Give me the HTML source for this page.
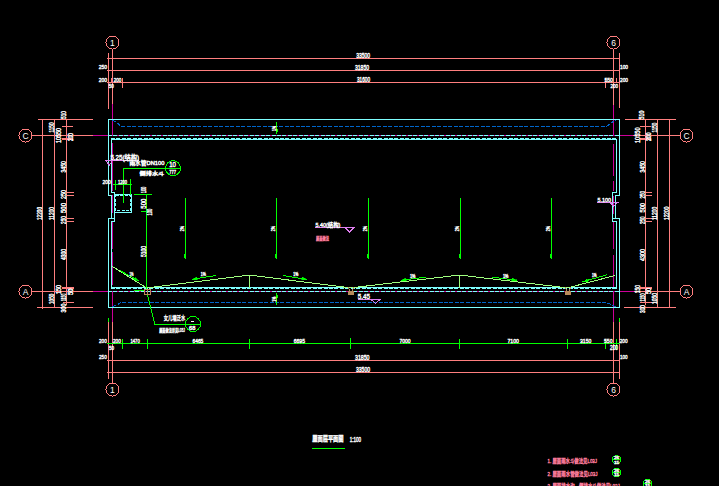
<!DOCTYPE html>
<html><head><meta charset="utf-8"><title>屋面层平面图</title>
<style>html,body{margin:0;padding:0;background:#000;overflow:hidden}svg{display:block}text{white-space:pre}</style>
</head><body>
<svg width="719" height="486" viewBox="0 0 719 486" shape-rendering="crispEdges">
<rect width="719" height="486" fill="#000"/>
<rect x="107" y="58" width="513" height="1" fill="#ff7f7f"/>
<rect x="107" y="70" width="513" height="1" fill="#ff7f7f"/>
<rect x="107" y="82" width="513" height="1" fill="#ff7f7f"/>
<rect x="112" y="49" width="1" height="55" fill="#ff7f7f"/>
<rect x="108" y="53" width="1" height="56" fill="#ff7f7f"/>
<rect x="613" y="49" width="1" height="56" fill="#ff7f7f"/>
<rect x="619" y="53" width="1" height="55" fill="#ff7f7f"/>
<rect x="122" y="78" width="1" height="10" fill="#ff7f7f"/>
<rect x="111" y="78" width="1" height="5" fill="#ff7f7f"/>
<rect x="605" y="78" width="1" height="10" fill="#ff7f7f"/>
<rect x="616" y="78" width="1" height="5" fill="#ff7f7f"/>
<circle cx="112.5" cy="42.5" r="6.5" fill="none" stroke="#ff7f7f" stroke-width="1"/>
<circle cx="613.5" cy="42.5" r="6.5" fill="none" stroke="#ff7f7f" stroke-width="1"/>
<rect x="107" y="360" width="513" height="1" fill="#ff7f7f"/>
<rect x="107" y="372" width="513" height="1" fill="#ff7f7f"/>
<rect x="112" y="322" width="1" height="62" fill="#ff7f7f"/>
<rect x="108" y="322" width="1" height="57" fill="#ff7f7f"/>
<rect x="613" y="322" width="1" height="62" fill="#ff7f7f"/>
<rect x="619" y="322" width="1" height="57" fill="#ff7f7f"/>
<circle cx="112.5" cy="389.5" r="6.5" fill="none" stroke="#ff7f7f" stroke-width="1"/>
<circle cx="613.5" cy="389.5" r="6.5" fill="none" stroke="#ff7f7f" stroke-width="1"/>
<rect x="38" y="119" width="55" height="1" fill="#ff7f7f"/>
<rect x="32" y="135" width="61" height="1" fill="#ff7f7f"/>
<rect x="32" y="291" width="61" height="1" fill="#ff7f7f"/>
<rect x="37" y="307" width="56" height="1" fill="#ff7f7f"/>
<rect x="42" y="119" width="1" height="190" fill="#ff7f7f"/>
<rect x="54" y="119" width="1" height="189" fill="#ff7f7f"/>
<rect x="66" y="119" width="1" height="186" fill="#ff7f7f"/>
<rect x="62" y="126" width="11" height="1" fill="#ff7f7f"/>
<rect x="62" y="138" width="11" height="1" fill="#ff7f7f"/>
<rect x="62" y="139" width="11" height="1" fill="#ff7f7f"/>
<rect x="66" y="192" width="8" height="1" fill="#ff7f7f"/>
<rect x="66" y="195" width="8" height="1" fill="#ff7f7f"/>
<rect x="66" y="218" width="8" height="1" fill="#ff7f7f"/>
<rect x="66" y="221" width="8" height="1" fill="#ff7f7f"/>
<rect x="62" y="287" width="12" height="1" fill="#ff7f7f"/>
<rect x="62" y="288" width="12" height="1" fill="#ff7f7f"/>
<rect x="63" y="302" width="11" height="1" fill="#ff7f7f"/>
<circle cx="25.5" cy="135.5" r="6.5" fill="none" stroke="#ff7f7f" stroke-width="1"/>
<circle cx="25.5" cy="291.5" r="6.5" fill="none" stroke="#ff7f7f" stroke-width="1"/>
<rect x="625" y="119" width="51" height="1" fill="#ff7f7f"/>
<rect x="633" y="135" width="48" height="1" fill="#ff7f7f"/>
<rect x="634" y="291" width="47" height="1" fill="#ff7f7f"/>
<rect x="624" y="307" width="52" height="1" fill="#ff7f7f"/>
<rect x="645" y="119" width="1" height="186" fill="#ff7f7f"/>
<rect x="657" y="119" width="1" height="189" fill="#ff7f7f"/>
<rect x="669" y="119" width="1" height="189" fill="#ff7f7f"/>
<rect x="640" y="126" width="11" height="1" fill="#ff7f7f"/>
<rect x="640" y="138" width="11" height="1" fill="#ff7f7f"/>
<rect x="640" y="139" width="11" height="1" fill="#ff7f7f"/>
<rect x="645" y="192" width="7" height="1" fill="#ff7f7f"/>
<rect x="645" y="195" width="7" height="1" fill="#ff7f7f"/>
<rect x="645" y="218" width="7" height="1" fill="#ff7f7f"/>
<rect x="645" y="221" width="7" height="1" fill="#ff7f7f"/>
<rect x="640" y="287" width="12" height="1" fill="#ff7f7f"/>
<rect x="640" y="288" width="12" height="1" fill="#ff7f7f"/>
<rect x="640" y="302" width="12" height="1" fill="#ff7f7f"/>
<circle cx="686.5" cy="135.5" r="6.5" fill="none" stroke="#ff7f7f" stroke-width="1"/>
<circle cx="686.5" cy="291.5" r="6.5" fill="none" stroke="#ff7f7f" stroke-width="1"/>
<rect x="112" y="104" width="1" height="32" fill="#cc0099"/>
<rect x="613" y="105" width="1" height="31" fill="#cc0099"/>
<rect x="112" y="143" width="1" height="48" fill="#cc0099"/>
<rect x="112" y="195" width="1" height="18" fill="#cc0099"/>
<rect x="112" y="222" width="1" height="27" fill="#cc0099"/>
<rect x="112" y="252" width="1" height="33" fill="#cc0099"/>
<rect x="112" y="292" width="1" height="30" fill="#cc0099"/>
<rect x="613" y="144" width="1" height="32" fill="#cc0099"/>
<rect x="613" y="181" width="1" height="10" fill="#cc0099"/>
<rect x="613" y="196" width="1" height="18" fill="#cc0099"/>
<rect x="613" y="222" width="1" height="27" fill="#cc0099"/>
<rect x="613" y="255" width="1" height="32" fill="#cc0099"/>
<rect x="613" y="292" width="1" height="30" fill="#cc0099"/>
<rect x="93" y="135" width="540" height="1" fill="#cc0099"/>
<rect x="93" y="291" width="541" height="1" fill="#cc0099"/>
<polygon points="108.5,119.5 619.5,119.5 619.5,195.5 615.5,195.5 615.5,218.5 619.5,218.5 619.5,307.5 108.5,307.5 108.5,218.5 111.5,218.5 111.5,195.5 108.5,195.5" fill="none" stroke="#7fffff" stroke-width="1" />
<rect x="108" y="218" width="7" height="1" fill="#7fffff"/>
<rect x="612" y="218" width="8" height="1" fill="#7fffff"/>
<rect x="111" y="139" width="506" height="1" fill="#7fffff"/>
<rect x="111" y="287" width="506" height="1" fill="#7fffff"/>
<line x1="111" y1="138.5" x2="617" y2="138.5" stroke="#7fffff" stroke-dasharray="4 1.45"/>
<line x1="111" y1="288.5" x2="617" y2="288.5" stroke="#7fffff" stroke-dasharray="4 1.45"/>
<polyline points="111.5,139.5 111.5,192.5 114.5,192.5 114.5,194.5" fill="none" stroke="#7fffff" stroke-width="1" />
<polyline points="114.5,212.5 114.5,221.5 111.5,221.5 111.5,288.5" fill="none" stroke="#7fffff" stroke-width="1" />
<polyline points="616.5,139.5 616.5,192.5 612.5,192.5 612.5,221.5 616.5,221.5 616.5,288.5" fill="none" stroke="#7fffff" stroke-width="1" />
<rect x="114.5" y="194.5" width="17" height="18" fill="none" stroke="#7fffff"/>
<rect x="115.5" y="195.5" width="15" height="15" fill="none" stroke="#7fffff" stroke-dasharray="3 1.5"/>
<line x1="108" y1="135.5" x2="620" y2="135.5" stroke="#7fffff" stroke-dasharray="4 1.45"/>
<line x1="108" y1="291.5" x2="620" y2="291.5" stroke="#7fffff" stroke-dasharray="4 1.45"/>
<polyline points="112.5,120.5 116,121.5 121,126.5 606,126.5 608,125.5 611.5,122.5 616,120.5" fill="none" stroke="#0066cc" stroke-width="1" stroke-dasharray="4 1.45"/>
<polyline points="112.5,306.5 116,305.5 121,302.5 606,302.5 609,303.5 612,305.5 616,306.5" fill="none" stroke="#0066cc" stroke-width="1" stroke-dasharray="4 1.45"/>
<polyline points="112.5,266.5 146.5,287.9 249.5,275.05 350.5,287.9 459.5,275.05 567.5,287.9 615,275.5" fill="none" stroke="#9fff7f" stroke-width="1" />
<rect x="249" y="275" width="1" height="13" fill="#9fff7f"/>
<rect x="459" y="275" width="1" height="13" fill="#9fff7f"/>
<rect x="185" y="198" width="1" height="61" fill="#00ff00"/>
<rect x="184" y="254" width="2" height="4" fill="#00ff00"/>
<rect x="276" y="198" width="1" height="61" fill="#00ff00"/>
<rect x="275" y="254" width="2" height="4" fill="#00ff00"/>
<rect x="368" y="198" width="1" height="61" fill="#00ff00"/>
<rect x="367" y="254" width="2" height="4" fill="#00ff00"/>
<rect x="460" y="198" width="1" height="61" fill="#00ff00"/>
<rect x="459" y="254" width="2" height="4" fill="#00ff00"/>
<rect x="551" y="198" width="1" height="61" fill="#00ff00"/>
<rect x="550" y="254" width="2" height="4" fill="#00ff00"/>
<rect x="276" y="122" width="1" height="12" fill="#00ff00"/>
<rect x="276" y="129" width="2" height="3" fill="#00ff00"/>
<rect x="276" y="293" width="1" height="12" fill="#00ff00"/>
<rect x="276" y="295" width="2" height="3" fill="#00ff00"/>
<line x1="120" y1="270.6" x2="139" y2="281" stroke="#00ff00" stroke-width="1" />
<polygon points="139.0,281.0 134.0,279.7 135.2,277.5" fill="#00ff00" stroke="#00ff00" stroke-width="0.6"/>
<line x1="216" y1="275.5" x2="192" y2="279.3" stroke="#00ff00" stroke-width="1" />
<polygon points="192.0,279.3 196.7,277.2 197.1,279.8" fill="#00ff00" stroke="#00ff00" stroke-width="0.6"/>
<line x1="283" y1="275.5" x2="307" y2="279.5" stroke="#00ff00" stroke-width="1" />
<polygon points="307.0,279.5 301.9,280.0 302.3,277.4" fill="#00ff00" stroke="#00ff00" stroke-width="0.6"/>
<line x1="426" y1="277.2" x2="401" y2="280.3" stroke="#00ff00" stroke-width="1" />
<polygon points="401.0,280.3 405.8,278.4 406.1,281.0" fill="#00ff00" stroke="#00ff00" stroke-width="0.6"/>
<line x1="492.5" y1="277.2" x2="517" y2="280.2" stroke="#00ff00" stroke-width="1" />
<polygon points="517.0,280.2 511.9,280.9 512.2,278.3" fill="#00ff00" stroke="#00ff00" stroke-width="0.6"/>
<line x1="607.5" y1="274.7" x2="582.5" y2="281.7" stroke="#00ff00" stroke-width="1" />
<polygon points="582.5,281.7 587.0,279.1 587.7,281.6" fill="#00ff00" stroke="#00ff00" stroke-width="0.6"/>
<polyline points="123.5,203 123.5,168.5 181,168.5" fill="none" stroke="#00ff00" stroke-width="1" />
<circle cx="173" cy="168.2" r="7.5" fill="none" stroke="#00ff00" stroke-width="1"/>
<rect x="113" y="184" width="19" height="1" fill="#00ff00"/>
<rect x="115" y="180" width="1" height="10" fill="#00ff00"/>
<rect x="130" y="179" width="1" height="16" fill="#00ff00"/>
<rect x="134" y="194" width="18" height="1" fill="#00ff00"/>
<rect x="146" y="194" width="1" height="95" fill="#00ff00"/>
<rect x="141" y="211" width="8" height="1" fill="#00ff00"/>
<rect x="134" y="290" width="11" height="1" fill="#00ff00"/>
<polyline points="147.5,295 155,324.5 201,324.5" fill="none" stroke="#00ff00" stroke-width="1" />
<circle cx="193" cy="324" r="7.5" fill="none" stroke="#00ff00" stroke-width="1"/>
<rect x="107" y="343" width="513" height="1" fill="#00ff00"/>
<rect x="122" y="339" width="1" height="10" fill="#00ff00"/>
<rect x="147" y="339" width="1" height="10" fill="#00ff00"/>
<rect x="249" y="339" width="1" height="10" fill="#00ff00"/>
<rect x="350" y="338" width="1" height="11" fill="#00ff00"/>
<rect x="459" y="339" width="1" height="10" fill="#00ff00"/>
<rect x="567" y="339" width="1" height="10" fill="#00ff00"/>
<rect x="605" y="339" width="1" height="10" fill="#00ff00"/>
<rect x="616" y="339" width="1" height="11" fill="#00ff00"/>
<rect x="108" y="318" width="1" height="4" fill="#00ff00"/>
<rect x="619" y="318" width="1" height="4" fill="#00ff00"/>
<rect x="312" y="448" width="33" height="1" fill="#00ff00"/>
<circle cx="616.5" cy="459.8" r="4.2" fill="none" stroke="#00ff00" stroke-width="1"/>
<line x1="612.3" y1="459.8" x2="620.7" y2="459.8" stroke="#00ff00" stroke-width="1" />
<circle cx="616.5" cy="472.4" r="4.2" fill="none" stroke="#00ff00" stroke-width="1"/>
<line x1="612.3" y1="472.4" x2="620.7" y2="472.4" stroke="#00ff00" stroke-width="1" />
<circle cx="647.6" cy="483.6" r="4.2" fill="none" stroke="#00ff00" stroke-width="1"/>
<line x1="643.4" y1="483.6" x2="651.8000000000001" y2="483.6" stroke="#00ff00" stroke-width="1" />
<rect x="348" y="291" width="6" height="4" fill="#b88a5a"/>
<line x1="348.5" y1="287" x2="349.5" y2="291" stroke="#b88a5a" stroke-width="1" />
<line x1="353.5" y1="287" x2="352.5" y2="291" stroke="#b88a5a" stroke-width="1" />
<rect x="565" y="291" width="6" height="4" fill="#b88a5a"/>
<line x1="565.5" y1="287" x2="566.5" y2="291" stroke="#b88a5a" stroke-width="1" />
<line x1="570.5" y1="287" x2="569.5" y2="291" stroke="#b88a5a" stroke-width="1" />
<rect x="144.5" y="289.5" width="3" height="5" fill="none" stroke="#b88a5a"/>
<rect x="147.5" y="289.5" width="3" height="5" fill="none" stroke="#b88a5a"/>
<rect x="105" y="160" width="34" height="1" fill="#df7fef"/>
<polyline points="105.5,160.5 109.5,165 112.5,160.5" fill="none" stroke="#df7fef" stroke-width="1" />
<rect x="315" y="227" width="40" height="1" fill="#df7fef"/>
<polyline points="345,227.5 349.5,232 354,227.5" fill="none" stroke="#df7fef" stroke-width="1" />
<rect x="358" y="299" width="23" height="1" fill="#df7fef"/>
<polyline points="371,299.5 375.5,303.5 380,299.5" fill="none" stroke="#df7fef" stroke-width="1" />
<rect x="597" y="202" width="22" height="1" fill="#df7fef"/>
<polyline points="610,202.5 613.8,206.5 617.5,202.5" fill="none" stroke="#df7fef" stroke-width="1" />
<g opacity="0.999" font-family="'Liberation Sans','Noto Sans CJK SC',sans-serif">
<text x="112.3" y="45.56" font-size="8.5" text-anchor="middle" fill="#ffffff">1</text>
<text x="613.5" y="45.56" font-size="8.5" text-anchor="middle" fill="#ffffff">6</text>
<text x="112.3" y="392.56" font-size="8.5" text-anchor="middle" fill="#ffffff">1</text>
<text x="613.5" y="392.56" font-size="8.5" text-anchor="middle" fill="#ffffff">6</text>
<text x="25.5" y="138.56" font-size="8.5" text-anchor="middle" fill="#ffffff">C</text>
<text x="25.5" y="294.56" font-size="8.5" text-anchor="middle" fill="#ffffff">A</text>
<text x="686.5" y="138.56" font-size="8.5" text-anchor="middle" fill="#ffffff">C</text>
<text x="686.5" y="294.56" font-size="8.5" text-anchor="middle" fill="#ffffff">A</text>
<text x="356.2" y="57.80" font-size="6.43" textLength="13.80" lengthAdjust="spacingAndGlyphs" fill="#ffffff" stroke="#ffffff" stroke-width="0.4" >33500</text>
<text x="355" y="69.70" font-size="6.43" textLength="14.00" lengthAdjust="spacingAndGlyphs" fill="#ffffff" stroke="#ffffff" stroke-width="0.4" >31850</text>
<text x="357" y="82.00" font-size="6.43" textLength="13.00" lengthAdjust="spacingAndGlyphs" fill="#ffffff" stroke="#ffffff" stroke-width="0.4" >31600</text>
<text x="98.7" y="69.00" font-size="6.00" textLength="8.30" lengthAdjust="spacingAndGlyphs" fill="#ffffff" stroke="#ffffff" stroke-width="0.4" >250</text>
<text x="98.7" y="81.50" font-size="6.00" textLength="8.30" lengthAdjust="spacingAndGlyphs" fill="#ffffff" stroke="#ffffff" stroke-width="0.4" >200</text>
<text x="113.7" y="81.50" font-size="6.00" textLength="7.60" lengthAdjust="spacingAndGlyphs" fill="#ffffff" stroke="#ffffff" stroke-width="0.4" >200</text>
<text x="108.7" y="88.00" font-size="5.71" textLength="5.00" lengthAdjust="spacingAndGlyphs" fill="#ffffff" stroke="#ffffff" stroke-width="0.4" >50</text>
<text x="620" y="69.00" font-size="6.00" textLength="8.00" lengthAdjust="spacingAndGlyphs" fill="#ffffff" stroke="#ffffff" stroke-width="0.4" >100</text>
<text x="620" y="81.50" font-size="6.00" textLength="8.00" lengthAdjust="spacingAndGlyphs" fill="#ffffff" stroke="#ffffff" stroke-width="0.4" >200</text>
<text x="604.4" y="81.50" font-size="6.00" textLength="8.60" lengthAdjust="spacingAndGlyphs" fill="#ffffff" stroke="#ffffff" stroke-width="0.4" >550</text>
<text x="610.6" y="88.20" font-size="5.71" textLength="7.40" lengthAdjust="spacingAndGlyphs" fill="#ffffff" stroke="#ffffff" stroke-width="0.4" >200</text>
<text x="99" y="343.00" font-size="6.00" textLength="7.70" lengthAdjust="spacingAndGlyphs" fill="#ffffff" stroke="#ffffff" stroke-width="0.4" >200</text>
<text x="113" y="343.00" font-size="6.00" textLength="7.80" lengthAdjust="spacingAndGlyphs" fill="#ffffff" stroke="#ffffff" stroke-width="0.4" >200</text>
<text x="109" y="349.50" font-size="5.71" textLength="5.00" lengthAdjust="spacingAndGlyphs" fill="#ffffff" stroke="#ffffff" stroke-width="0.4" >50</text>
<text x="99" y="359.20" font-size="6.00" textLength="7.70" lengthAdjust="spacingAndGlyphs" fill="#ffffff" stroke="#ffffff" stroke-width="0.4" >250</text>
<text x="130.5" y="343.00" font-size="6.00" textLength="9.20" lengthAdjust="spacingAndGlyphs" fill="#ffffff" stroke="#ffffff" stroke-width="0.4" >1470</text>
<text x="192.5" y="343.00" font-size="6.00" textLength="10.80" lengthAdjust="spacingAndGlyphs" fill="#ffffff" stroke="#ffffff" stroke-width="0.4" >6465</text>
<text x="293.7" y="343.00" font-size="6.00" textLength="11.30" lengthAdjust="spacingAndGlyphs" fill="#ffffff" stroke="#ffffff" stroke-width="0.4" >6695</text>
<text x="399.5" y="343.00" font-size="6.00" textLength="11.00" lengthAdjust="spacingAndGlyphs" fill="#ffffff" stroke="#ffffff" stroke-width="0.4" >7000</text>
<text x="507.5" y="343.00" font-size="6.00" textLength="11.50" lengthAdjust="spacingAndGlyphs" fill="#ffffff" stroke="#ffffff" stroke-width="0.4" >7100</text>
<text x="580" y="343.00" font-size="6.00" textLength="11.30" lengthAdjust="spacingAndGlyphs" fill="#ffffff" stroke="#ffffff" stroke-width="0.4" >3150</text>
<text x="604" y="343.00" font-size="6.00" textLength="8.50" lengthAdjust="spacingAndGlyphs" fill="#ffffff" stroke="#ffffff" stroke-width="0.4" >550</text>
<text x="619.7" y="343.00" font-size="6.00" textLength="7.80" lengthAdjust="spacingAndGlyphs" fill="#ffffff" stroke="#ffffff" stroke-width="0.4" >200</text>
<text x="610" y="349.70" font-size="6.29" textLength="8.00" lengthAdjust="spacingAndGlyphs" fill="#ffffff" stroke="#ffffff" stroke-width="0.4" >200</text>
<text x="620" y="359.20" font-size="6.00" textLength="7.50" lengthAdjust="spacingAndGlyphs" fill="#ffffff" stroke="#ffffff" stroke-width="0.4" >100</text>
<text x="355" y="360.00" font-size="6.29" textLength="14.50" lengthAdjust="spacingAndGlyphs" fill="#ffffff" stroke="#ffffff" stroke-width="0.4" >31850</text>
<text x="356" y="371.60" font-size="6.29" textLength="14.00" lengthAdjust="spacingAndGlyphs" fill="#ffffff" stroke="#ffffff" stroke-width="0.4" >33500</text>
<text transform="translate(66.00,119.00) rotate(-90)" x="0" y="0" font-size="6.29" textLength="8.00" lengthAdjust="spacingAndGlyphs" fill="#ffffff" stroke="#ffffff" stroke-width="0.4">510</text>
<text transform="translate(54.20,132.50) rotate(-90)" x="0" y="0" font-size="6.29" textLength="10.00" lengthAdjust="spacingAndGlyphs" fill="#ffffff" stroke="#ffffff" stroke-width="0.4">1150</text>
<text transform="translate(61.20,143.00) rotate(-90)" x="0" y="0" font-size="6.29" textLength="15.00" lengthAdjust="spacingAndGlyphs" fill="#ffffff" stroke="#ffffff" stroke-width="0.4">10550</text>
<text transform="translate(72.80,141.00) rotate(-90)" x="0" y="0" font-size="6.29" textLength="8.00" lengthAdjust="spacingAndGlyphs" fill="#ffffff" stroke="#ffffff" stroke-width="0.4">200</text>
<text transform="translate(66.40,172.50) rotate(-90)" x="0" y="0" font-size="6.29" textLength="11.50" lengthAdjust="spacingAndGlyphs" fill="#ffffff" stroke="#ffffff" stroke-width="0.4">3450</text>
<text transform="translate(66.40,199.00) rotate(-90)" x="0" y="0" font-size="6.29" textLength="9.00" lengthAdjust="spacingAndGlyphs" fill="#ffffff" stroke="#ffffff" stroke-width="0.4">250</text>
<text transform="translate(66.40,213.00) rotate(-90)" x="0" y="0" font-size="6.29" textLength="10.00" lengthAdjust="spacingAndGlyphs" fill="#ffffff" stroke="#ffffff" stroke-width="0.4">500</text>
<text transform="translate(66.40,224.00) rotate(-90)" x="0" y="0" font-size="6.29" textLength="8.00" lengthAdjust="spacingAndGlyphs" fill="#ffffff" stroke="#ffffff" stroke-width="0.4">250</text>
<text transform="translate(42.20,220.00) rotate(-90)" x="0" y="0" font-size="6.29" textLength="13.00" lengthAdjust="spacingAndGlyphs" fill="#ffffff" stroke="#ffffff" stroke-width="0.4">12200</text>
<text transform="translate(54.20,220.00) rotate(-90)" x="0" y="0" font-size="6.29" textLength="13.00" lengthAdjust="spacingAndGlyphs" fill="#ffffff" stroke="#ffffff" stroke-width="0.4">11200</text>
<text transform="translate(66.40,260.00) rotate(-90)" x="0" y="0" font-size="6.29" textLength="11.00" lengthAdjust="spacingAndGlyphs" fill="#ffffff" stroke="#ffffff" stroke-width="0.4">4300</text>
<text transform="translate(60.90,294.00) rotate(-90)" x="0" y="0" font-size="6.29" textLength="9.00" lengthAdjust="spacingAndGlyphs" fill="#ffffff" stroke="#ffffff" stroke-width="0.4">150</text>
<text transform="translate(72.80,295.00) rotate(-90)" x="0" y="0" font-size="6.29" textLength="6.50" lengthAdjust="spacingAndGlyphs" fill="#ffffff" stroke="#ffffff" stroke-width="0.4">50</text>
<text transform="translate(54.20,304.00) rotate(-90)" x="0" y="0" font-size="6.29" textLength="10.30" lengthAdjust="spacingAndGlyphs" fill="#ffffff" stroke="#ffffff" stroke-width="0.4">1050</text>
<text transform="translate(66.40,301.00) rotate(-90)" x="0" y="0" font-size="6.29" textLength="7.30" lengthAdjust="spacingAndGlyphs" fill="#ffffff" stroke="#ffffff" stroke-width="0.4">1150</text>
<text transform="translate(66.40,312.50) rotate(-90)" x="0" y="0" font-size="6.29" textLength="9.00" lengthAdjust="spacingAndGlyphs" fill="#ffffff" stroke="#ffffff" stroke-width="0.4">300</text>
<text transform="translate(644.20,119.40) rotate(-90)" x="0" y="0" font-size="6.29" textLength="8.80" lengthAdjust="spacingAndGlyphs" fill="#ffffff" stroke="#ffffff" stroke-width="0.4">510</text>
<text transform="translate(657.20,132.50) rotate(-90)" x="0" y="0" font-size="6.29" textLength="9.80" lengthAdjust="spacingAndGlyphs" fill="#ffffff" stroke="#ffffff" stroke-width="0.4">1150</text>
<text transform="translate(639.70,143.00) rotate(-90)" x="0" y="0" font-size="6.29" textLength="15.50" lengthAdjust="spacingAndGlyphs" fill="#ffffff" stroke="#ffffff" stroke-width="0.4">10550</text>
<text transform="translate(650.90,141.00) rotate(-90)" x="0" y="0" font-size="6.29" textLength="8.50" lengthAdjust="spacingAndGlyphs" fill="#ffffff" stroke="#ffffff" stroke-width="0.4">200</text>
<text transform="translate(645.20,172.50) rotate(-90)" x="0" y="0" font-size="6.29" textLength="11.50" lengthAdjust="spacingAndGlyphs" fill="#ffffff" stroke="#ffffff" stroke-width="0.4">3450</text>
<text transform="translate(645.20,198.50) rotate(-90)" x="0" y="0" font-size="6.29" textLength="7.50" lengthAdjust="spacingAndGlyphs" fill="#ffffff" stroke="#ffffff" stroke-width="0.4">250</text>
<text transform="translate(645.20,212.50) rotate(-90)" x="0" y="0" font-size="6.29" textLength="9.50" lengthAdjust="spacingAndGlyphs" fill="#ffffff" stroke="#ffffff" stroke-width="0.4">500</text>
<text transform="translate(645.20,224.00) rotate(-90)" x="0" y="0" font-size="6.29" textLength="7.50" lengthAdjust="spacingAndGlyphs" fill="#ffffff" stroke="#ffffff" stroke-width="0.4">250</text>
<text transform="translate(656.90,220.00) rotate(-90)" x="0" y="0" font-size="6.29" textLength="13.30" lengthAdjust="spacingAndGlyphs" fill="#ffffff" stroke="#ffffff" stroke-width="0.4">11200</text>
<text transform="translate(669.20,220.00) rotate(-90)" x="0" y="0" font-size="6.29" textLength="13.30" lengthAdjust="spacingAndGlyphs" fill="#ffffff" stroke="#ffffff" stroke-width="0.4">12200</text>
<text transform="translate(645.20,261.00) rotate(-90)" x="0" y="0" font-size="6.29" textLength="12.00" lengthAdjust="spacingAndGlyphs" fill="#ffffff" stroke="#ffffff" stroke-width="0.4">4300</text>
<text transform="translate(639.70,293.30) rotate(-90)" x="0" y="0" font-size="6.29" textLength="8.30" lengthAdjust="spacingAndGlyphs" fill="#ffffff" stroke="#ffffff" stroke-width="0.4">150</text>
<text transform="translate(650.50,294.00) rotate(-90)" x="0" y="0" font-size="6.29" textLength="6.00" lengthAdjust="spacingAndGlyphs" fill="#ffffff" stroke="#ffffff" stroke-width="0.4">50</text>
<text transform="translate(645.20,301.50) rotate(-90)" x="0" y="0" font-size="6.29" textLength="8.00" lengthAdjust="spacingAndGlyphs" fill="#ffffff" stroke="#ffffff" stroke-width="0.4">1150</text>
<text transform="translate(645.20,313.00) rotate(-90)" x="0" y="0" font-size="6.29" textLength="8.00" lengthAdjust="spacingAndGlyphs" fill="#ffffff" stroke="#ffffff" stroke-width="0.4">300</text>
<text transform="translate(656.90,304.00) rotate(-90)" x="0" y="0" font-size="6.29" textLength="11.00" lengthAdjust="spacingAndGlyphs" fill="#ffffff" stroke="#ffffff" stroke-width="0.4">1050</text>
<text x="102.5" y="184.00" font-size="5.71" textLength="8.10" lengthAdjust="spacingAndGlyphs" fill="#ffffff" stroke="#ffffff" stroke-width="0.4" >200</text>
<text x="118" y="184.00" font-size="5.71" textLength="9.00" lengthAdjust="spacingAndGlyphs" fill="#ffffff" stroke="#ffffff" stroke-width="0.4" >1200</text>
<text transform="translate(145.50,193.30) rotate(-90)" x="0" y="0" font-size="6.29" textLength="6.60" lengthAdjust="spacingAndGlyphs" fill="#ffffff" stroke="#ffffff" stroke-width="0.4">100</text>
<text transform="translate(145.70,208.70) rotate(-90)" x="0" y="0" font-size="6.29" textLength="10.00" lengthAdjust="spacingAndGlyphs" fill="#ffffff" stroke="#ffffff" stroke-width="0.4">500</text>
<text transform="translate(152.20,215.40) rotate(-90)" x="0" y="0" font-size="6.29" textLength="6.70" lengthAdjust="spacingAndGlyphs" fill="#ffffff" stroke="#ffffff" stroke-width="0.4">100</text>
<text transform="translate(145.90,257.00) rotate(-90)" x="0" y="0" font-size="6.29" textLength="11.00" lengthAdjust="spacingAndGlyphs" fill="#ffffff" stroke="#ffffff" stroke-width="0.4">5100</text>
<text transform="translate(183.90,231.20) rotate(-90)" x="0" y="0" font-size="4.86" textLength="5.20" lengthAdjust="spacingAndGlyphs" fill="#ffffff" stroke="#ffffff" stroke-width="0.4">2%</text>
<text transform="translate(274.90,231.20) rotate(-90)" x="0" y="0" font-size="4.86" textLength="5.20" lengthAdjust="spacingAndGlyphs" fill="#ffffff" stroke="#ffffff" stroke-width="0.4">2%</text>
<text transform="translate(366.90,231.20) rotate(-90)" x="0" y="0" font-size="4.86" textLength="5.20" lengthAdjust="spacingAndGlyphs" fill="#ffffff" stroke="#ffffff" stroke-width="0.4">2%</text>
<text transform="translate(458.90,231.20) rotate(-90)" x="0" y="0" font-size="4.86" textLength="5.20" lengthAdjust="spacingAndGlyphs" fill="#ffffff" stroke="#ffffff" stroke-width="0.4">2%</text>
<text transform="translate(549.90,231.20) rotate(-90)" x="0" y="0" font-size="4.86" textLength="5.20" lengthAdjust="spacingAndGlyphs" fill="#ffffff" stroke="#ffffff" stroke-width="0.4">2%</text>
<text transform="translate(276.10,131.00) rotate(-90)" x="0" y="0" font-size="5.14" textLength="5.00" lengthAdjust="spacingAndGlyphs" fill="#ffffff" stroke="#ffffff" stroke-width="0.4">1%</text>
<text transform="translate(276.30,301.70) rotate(-90)" x="0" y="0" font-size="5.14" textLength="5.00" lengthAdjust="spacingAndGlyphs" fill="#ffffff" stroke="#ffffff" stroke-width="0.4">1%</text>
<text x="200.8" y="276.30" font-size="4.71" textLength="5.00" lengthAdjust="spacingAndGlyphs" fill="#ffffff" stroke="#ffffff" stroke-width="0.4" >1%</text>
<text x="293.3" y="276.30" font-size="4.71" textLength="5.00" lengthAdjust="spacingAndGlyphs" fill="#ffffff" stroke="#ffffff" stroke-width="0.4" >1%</text>
<text x="410" y="277.50" font-size="5.00" textLength="5.50" lengthAdjust="spacingAndGlyphs" fill="#ffffff" stroke="#ffffff" stroke-width="0.4" >1%</text>
<text x="503" y="277.50" font-size="5.00" textLength="5.50" lengthAdjust="spacingAndGlyphs" fill="#ffffff" stroke="#ffffff" stroke-width="0.4" >1%</text>
<text x="592" y="277.20" font-size="4.57" textLength="4.50" lengthAdjust="spacingAndGlyphs" fill="#ffffff" stroke="#ffffff" stroke-width="0.4" >1%</text>
<text x="129.5" y="275.50" font-size="5.71" textLength="4.00" lengthAdjust="spacingAndGlyphs" fill="#ffffff" stroke="#ffffff" stroke-width="0.4" >1%</text>
<text x="110.4" y="159.63" font-size="6.40" textLength="28.60" lengthAdjust="spacingAndGlyphs" fill="#ffffff" stroke="#ffffff" stroke-width="0.4" >5.25(结构)</text>
<text x="315.6" y="226.76" font-size="6.20" textLength="24.70" lengthAdjust="spacingAndGlyphs" fill="#ffffff" stroke="#ffffff" stroke-width="0.4" >5.40(结构)</text>
<text x="357.8" y="298.90" font-size="7.14" textLength="12.20" lengthAdjust="spacingAndGlyphs" fill="#ffffff" stroke="#ffffff" stroke-width="0.4" >5.45</text>
<text x="597.5" y="202.20" font-size="6.00" textLength="13.50" lengthAdjust="spacingAndGlyphs" fill="#ffffff" stroke="#ffffff" stroke-width="0.4" >5.100</text>
<text x="316" y="239.50" font-size="4.20" textLength="13.00" lengthAdjust="spacingAndGlyphs" fill="#ff7f9f" stroke="#ff7f9f" stroke-width="0.4" >屋面做法</text>
<text x="129.4" y="165.15" font-size="5.40" textLength="35.00" lengthAdjust="spacingAndGlyphs" fill="#ffffff" stroke="#ffffff" stroke-width="0.4" >雨水管DN100</text>
<text x="139.4" y="175.22" font-size="4.80" textLength="25.00" lengthAdjust="spacingAndGlyphs" fill="#ffffff" stroke="#ffffff" stroke-width="0.4" >侧排水斗</text>
<text x="169.2" y="167.00" font-size="6.57" textLength="6.80" lengthAdjust="spacingAndGlyphs" fill="#ffffff" stroke="#ffffff" stroke-width="0.4" >10</text>
<text x="169.2" y="174.00" font-size="5.71" textLength="6.80" lengthAdjust="spacingAndGlyphs" fill="#ffffff" stroke="#ffffff" stroke-width="0.4" >777</text>
<text x="163.7" y="320.36" font-size="6.20" textLength="21.50" lengthAdjust="spacingAndGlyphs" fill="#ffffff" stroke="#ffffff" stroke-width="0.4" >女儿墙泛水</text>
<text x="159.2" y="331.60" font-size="5.00" textLength="25.70" lengthAdjust="spacingAndGlyphs" fill="#ffffff" stroke="#ffffff" stroke-width="0.4" >屋面做法详见L03J</text>
<rect x="191" y="321" width="3" height="1" fill="#ffffff"/>
<text x="189" y="330.00" font-size="5.29" textLength="6.30" lengthAdjust="spacingAndGlyphs" fill="#ffffff" stroke="#ffffff" stroke-width="0.4" >68</text>
<text x="312.2" y="441.31" font-size="7.40" textLength="31.40" lengthAdjust="spacingAndGlyphs" fill="#ffffff" stroke="#ffffff" stroke-width="0.4" font-weight="bold">屋面层平面图</text>
<text x="349.7" y="442.20" font-size="6.29" textLength="11.30" lengthAdjust="spacingAndGlyphs" fill="#ffffff" stroke="#ffffff" stroke-width="0.4" >1:100</text>
<text x="547.5" y="463.08" font-size="6.00" textLength="49.50" lengthAdjust="spacingAndGlyphs" fill="#ff7f9f" stroke="#ff7f9f" stroke-width="0.4" >1. 屋面雨水斗做法见L03J</text>
<text x="547.5" y="475.88" font-size="6.00" textLength="50.00" lengthAdjust="spacingAndGlyphs" fill="#ff7f9f" stroke="#ff7f9f" stroke-width="0.4" >2. 屋面雨水管做法见L03J</text>
<text x="547.5" y="487.88" font-size="6.00" textLength="72.20" lengthAdjust="spacingAndGlyphs" fill="#ff7f9f" stroke="#ff7f9f" stroke-width="0.4" >3. 屋面排水沟、侧排水斗做法见L03J</text>
<text x="613.9" y="459.20" font-size="4.29" textLength="5.20" lengthAdjust="spacingAndGlyphs" fill="#ffffff" stroke="#ffffff" stroke-width="0.4" >26</text>
<text x="613.9" y="463.50" font-size="4.00" textLength="5.20" lengthAdjust="spacingAndGlyphs" fill="#ffffff" stroke="#ffffff" stroke-width="0.4" >15</text>
<text x="613.9" y="471.80" font-size="4.29" textLength="5.20" lengthAdjust="spacingAndGlyphs" fill="#ffffff" stroke="#ffffff" stroke-width="0.4" >26</text>
<text x="613.9" y="476.10" font-size="4.00" textLength="5.20" lengthAdjust="spacingAndGlyphs" fill="#ffffff" stroke="#ffffff" stroke-width="0.4" >15</text>
<text x="645.0" y="483.00" font-size="4.29" textLength="5.20" lengthAdjust="spacingAndGlyphs" fill="#ffffff" stroke="#ffffff" stroke-width="0.4" >26</text>
<text x="645.0" y="487.30" font-size="4.00" textLength="5.20" lengthAdjust="spacingAndGlyphs" fill="#ffffff" stroke="#ffffff" stroke-width="0.4" >15</text>
</g>
</svg>
</body></html>
